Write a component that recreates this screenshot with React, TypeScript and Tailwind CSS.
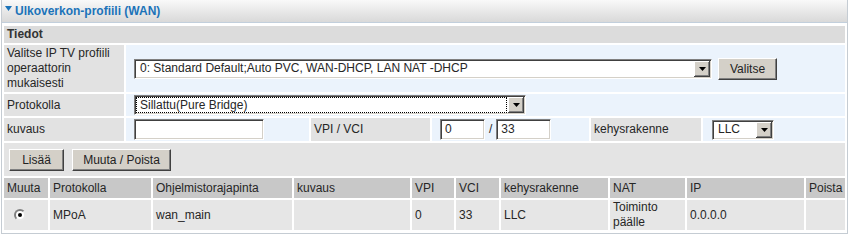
import React from "react";

function Arrow() {
  return (
    <div className="flex h-[16px] w-[16px] shrink-0 items-center justify-center bg-[#d4d0c8] shadow-[inset_-1px_-1px_0_#404040,inset_1px_1px_0_#ffffff,inset_-2px_-2px_0_#808080]">
      <svg width="7" height="4" viewBox="0 0 7 4">
        <path d="M0 0H7L3.5 4Z" fill="#000" />
      </svg>
    </div>
  );
}

function Select({ cls, text, focus }: { cls: string; text: string; focus?: boolean }) {
  return (
    <div
      className={`flex h-[20px] shrink-0 items-center border border-t-[#808080] border-l-[#808080] border-r-white border-b-white bg-white p-[1px] shadow-[inset_1px_1px_0_#404040,inset_-1px_-1px_0_#d4d0c8] ${cls}`}
    >
      <div
        className={
          focus
            ? "mr-[1px] flex h-full flex-1 items-center overflow-hidden whitespace-nowrap border border-dotted border-black pl-[3px]"
            : "flex h-full flex-1 items-center overflow-hidden whitespace-nowrap pl-[4px]"
        }
      >
        {text}
      </div>
      <Arrow />
    </div>
  );
}

function Input({ cls, text }: { cls: string; text?: string }) {
  return (
    <div
      className={`flex h-[21px] shrink-0 items-center border border-t-[#808080] border-l-[#808080] border-r-white border-b-white bg-white pl-[4px] shadow-[inset_1px_1px_0_#404040,inset_-1px_-1px_0_#d4d0c8] ${cls}`}
    >
      {text}
    </div>
  );
}

function Btn({ cls, children }: { cls: string; children: React.ReactNode }) {
  return (
    <div
      className={`flex h-[22px] shrink-0 items-center justify-center border border-t-white border-l-white border-r-[#404040] border-b-[#404040] bg-[#d4d0c8] text-[#222] shadow-[inset_-1px_-1px_0_#808080] ${cls}`}
    >
      {children}
    </div>
  );
}

function Radio() {
  return (
    <div className="flex h-[12px] w-[12px] items-center justify-center rounded-full border-2 border-t-[#808080] border-l-[#808080] border-r-[#e8e8e8] border-b-[#e8e8e8] bg-white">
      <div className="h-[4px] w-[4px] rounded-full bg-black" />
    </div>
  );
}

export default function App() {
  const label = "flex items-center bg-[#e2e2e2] pl-[3px]";
  const value = "flex items-center bg-[#ebf3fc] pl-[8px]";
  const th = "flex items-center bg-[#c8c8c8] pl-[3px] whitespace-nowrap overflow-hidden";
  const td = "flex items-center bg-[#e6e6e6] pl-[3px] whitespace-nowrap";
  return (
    <div className="font-['Liberation_Sans',Arial,Helvetica,sans-serif] text-[12px] leading-[15px] text-[#262626]">
      <div className="ml-px w-[847px] border-x border-b border-[#c5ccd3] bg-white pb-[3px]">
        <div className="flex h-[23px] items-center gap-[3px] border-b border-[#c2cfdc] bg-gradient-to-b from-[#f9f9f9] to-[#d9d9d9] pl-[3px] text-[12px] font-bold text-[#1b73b9]">
          <svg width="7" height="5" viewBox="0 0 7 5" className="mb-[5px]">
            <path d="M0 0H7L3.5 5Z" fill="#1b73b9" />
          </svg>
          <span>Ulkoverkon-profiili (WAN)</span>
        </div>
        <div className="px-[2px] pt-[3px]">
          <div className="grid grid-cols-[120px_183px_119px_157px_110px_1fr] gap-[2px]">
            <div className="col-span-6 flex h-[17px] items-center bg-[#dcdcdc] pl-[3px] font-bold text-[#333]">
              Tiedot
            </div>

            <div className="flex h-[47px] items-center bg-[#e2e2e2] pl-[3px]">
              <div>
                Valitse IP TV profiili
                <br />
                operaattorin
                <br />
                mukaisesti
              </div>
            </div>
            <div className={`col-span-5 gap-[6px] ${value}`}>
              <Select cls="w-[578px]" text="0: Standard Default;Auto PVC, WAN-DHCP, LAN NAT -DHCP" />
              <Btn cls="w-[59px] mt-[1px]">Valitse</Btn>
            </div>

            <div className={`h-[22px] ${label}`}>Protokolla</div>
            <div className={`col-span-5 ${value}`}>
              <Select cls="w-[392px] h-[19px]" text="Sillattu(Pure Bridge)" focus />
            </div>

            <div className={`h-[23px] ${label}`}>kuvaus</div>
            <div className={value}>
              <Input cls="w-[130px]" />
            </div>
            <div className={label}>VPI / VCI</div>
            <div className={value}>
              <Input cls="w-[45px]" text="0" />
              <span className="px-[4px]">/</span>
              <Input cls="w-[55px]" text="33" />
            </div>
            <div className={label}>kehysrakenne</div>
            <div className={`pl-[9px] ${value}`}>
              <Select cls="w-[62px]" text="LLC" />
            </div>

            <div className="col-span-6 flex h-[33px] items-center gap-[8px] bg-[#e4e4e4] pl-[5px] pt-[1px]">
              <Btn cls="w-[55px]">Lisää</Btn>
              <Btn cls="w-[99px]">Muuta / Poista</Btn>
            </div>
          </div>

          <div className="mt-[2px] grid grid-cols-[44px_101px_139px_116px_42px_43px_107px_75px_117px_1fr] gap-[2px]">
            <div className={`h-[20px] ${th}`}>Muuta</div>
            <div className={th}>Protokolla</div>
            <div className={th}>Ohjelmistorajapinta</div>
            <div className={th}>kuvaus</div>
            <div className={th}>VPI</div>
            <div className={th}>VCI</div>
            <div className={th}>kehysrakenne</div>
            <div className={th}>NAT</div>
            <div className={th}>IP</div>
            <div className={`${th} pl-[1px]`}>Poista</div>

            <div className={`h-[30px] pl-[10px] ${td}`}>
              <Radio />
            </div>
            <div className={td}>MPoA</div>
            <div className={td}>wan_main</div>
            <div className={td}></div>
            <div className={td}>0</div>
            <div className={td}>33</div>
            <div className={td}>LLC</div>
            <div className={td}>
              <div>
                Toiminto
                <br />
                päälle
              </div>
            </div>
            <div className={td}>0.0.0.0</div>
            <div className={td}></div>
          </div>
        </div>
      </div>
    </div>
  );
}
